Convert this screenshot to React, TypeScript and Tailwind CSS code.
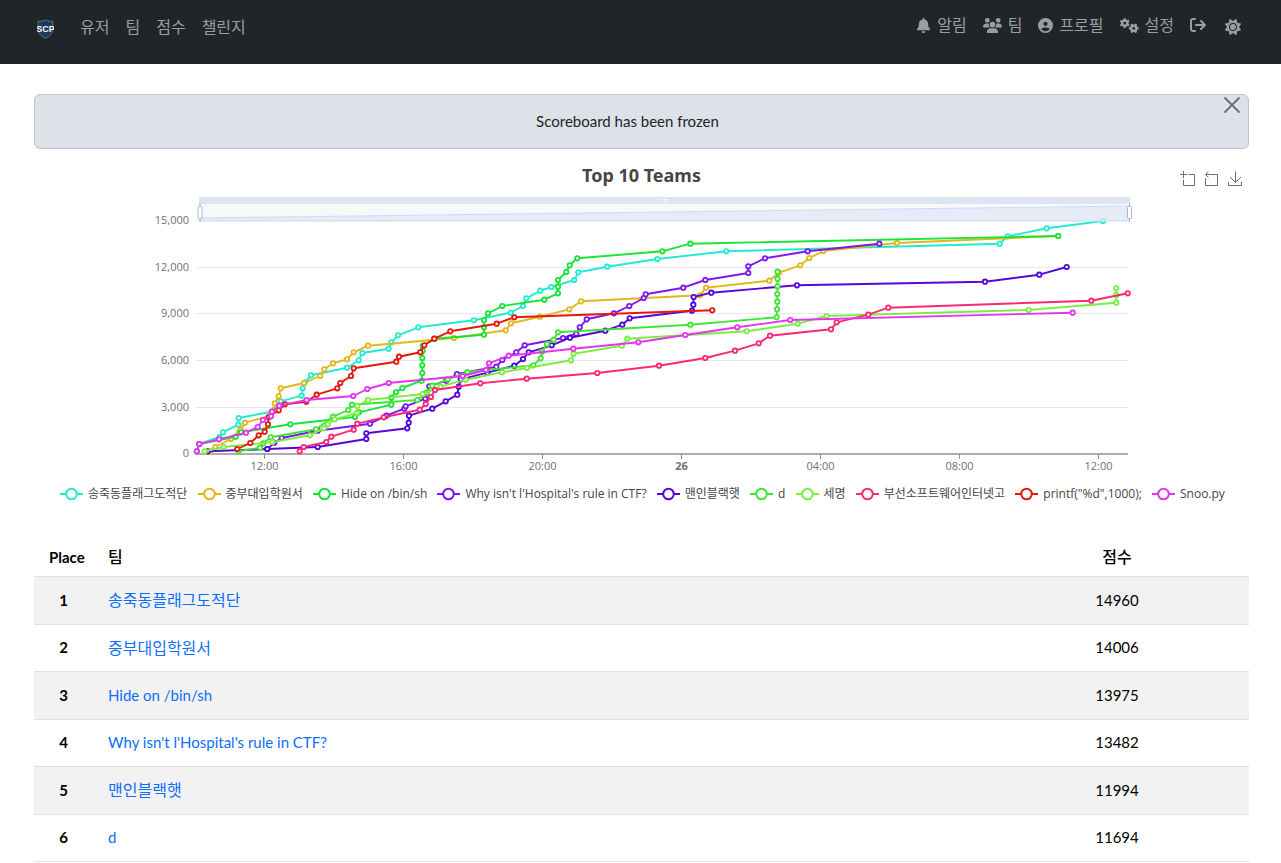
import type { ReactNode } from "react";
import {
  FaArrowRightFromBracket,
  FaBell,
  FaCircleUser,
  FaGears,
  FaSun,
  FaUsers,
} from "react-icons/fa6";

type Point = [number, number];

interface Series {
  name: string;
  color: string;
  points: Point[];
}

interface Standing {
  place: number;
  name: string;
  score: number;
}

const series: Series[] = [
  {
    name: "송죽동플래그도적단",
    color: "#22ebd0",
    points: [
      [197, 451.3], [199.3, 444], [219.5, 437], [223, 432.3], [238.4, 424.7], [238.7, 418],
      [271.5, 411.7], [280.7, 401.3], [301.7, 395.7], [302.7, 388.3], [305, 382.3], [311, 375.3],
      [347, 367.7], [358.7, 360.3], [362.3, 353], [388.7, 348.7], [391.3, 342.3], [398, 335.3],
      [418.3, 327.3], [473.7, 320.3], [510.7, 312.7], [523, 306], [526.3, 298.3], [540.3, 290.7],
      [551.3, 287], [574.3, 280], [578.3, 272.3], [607.3, 266.7], [657.3, 259], [726.3, 251.3],
      [999.7, 243.7], [1007.7, 236.3], [1046.7, 228.3], [1103, 221],
    ],
  },
  {
    name: "중부대입학원서",
    color: "#e3b71c",
    points: [
      [210.3, 451.3], [215.3, 447], [231, 439], [239, 432.7], [240.7, 429.7], [245, 422.7],
      [270, 415.7], [274.7, 403.3], [278.7, 396.3], [280.7, 388.3], [304, 383], [320.3, 376],
      [324.3, 369.3], [333, 363.3], [347, 359.3], [353.7, 352.3], [368, 345.7], [454, 338],
      [505.7, 330.3], [511, 323.3], [540, 316.7], [569.3, 309.3], [581, 301.3], [700, 295.3],
      [706, 287.7], [769.3, 280.7], [779, 272.7], [800.3, 265.3], [809.3, 258], [823.3, 251],
      [897, 243], [1058, 236],
    ],
  },
  {
    name: "Hide on /bin/sh",
    color: "#16e535",
    points: [
      [197, 451.3], [199.3, 444], [235.7, 436.7], [241, 432.3], [290.3, 424.3], [355, 417],
      [359, 412.3], [391.3, 404.7], [391.3, 397.7], [396, 392.3], [402.3, 388], [421.7, 380.7],
      [422.3, 373], [422.3, 365.3], [422.3, 358], [422.7, 350.7], [422.7, 346], [434.3, 338.7],
      [484, 334.7], [484, 327.3], [484, 320.3], [488, 313.3], [502.3, 306], [544.3, 299.7],
      [558, 293.3], [558, 286.7], [558, 280], [566.3, 272], [569.7, 265.3], [577.3, 258.3],
      [662.3, 251.3], [690.3, 243.7], [1058.3, 236],
    ],
  },
  {
    name: "Why isn't l'Hospital's rule in CTF?",
    color: "#8016ee",
    points: [
      [267.3, 449], [274.3, 442.7], [281.7, 438], [317.7, 430.7], [370, 423.7], [386.3, 415.7],
      [404.3, 408.7], [405.7, 406.3], [425.3, 398.7], [429.3, 386.3], [446.3, 380.7], [457, 374],
      [496.3, 366.7], [502.3, 360], [516.3, 352.3], [524.7, 345.3], [563, 338], [576.3, 333.7],
      [579.7, 327.3], [586.7, 319.3], [614, 313.3], [629.3, 306], [643.7, 298], [645.7, 294.3],
      [683.3, 287.7], [705.3, 280], [748.3, 273], [748.3, 266.3], [765, 258.3], [807.7, 251.3],
      [879.3, 243.7],
    ],
  },
  {
    name: "맨인블랙햇",
    color: "#5606dc",
    points: [
      [207.7, 451.3], [267.3, 449], [317.7, 447], [366.3, 439], [366.3, 433.3], [407.3, 428.3],
      [408.7, 422.7], [409, 415.7], [432.3, 408.7], [445.7, 401.3], [457.3, 394.7], [458.7, 386.7],
      [460.7, 379.3], [487.3, 372.7], [514.3, 365.7], [523, 359], [528.7, 352.3], [551.7, 345.3],
      [570, 337.7], [605.3, 330.7], [622.3, 324.7], [629.7, 318.3], [692, 310.7], [693.3, 304.7],
      [693.7, 297], [711.3, 292.7], [797, 285.3], [985, 281.7], [1039.3, 274.7], [1066.7, 267],
    ],
  },
  {
    name: "d",
    color: "#42e436",
    points: [
      [238.3, 451.3], [260, 447.7], [263.3, 443.3], [270.7, 437.3], [316, 429.3], [333, 416.7],
      [348.3, 410], [352, 404.7], [417.3, 400], [426.7, 392.7], [432.3, 385.7], [447.7, 379.3],
      [467.3, 372], [533.3, 365.3], [540.7, 358.3], [542, 351.7], [547, 344], [553.7, 339.7],
      [558, 332.3], [690.3, 324.7], [776.7, 317.3], [777, 309.3], [777.3, 301.7], [777.3, 294],
      [777.5, 286.3], [777.5, 278.7], [777.5, 271.7],
    ],
  },
  {
    name: "세명",
    color: "#7cee42",
    points: [
      [204.7, 451.3], [223.7, 447], [272.3, 442], [310, 435.3], [323.7, 428.3], [327.7, 424.3],
      [334.7, 419.3], [356.7, 413], [357.3, 406], [368, 400], [422.7, 394], [440.7, 386.7],
      [465.7, 379.7], [502, 372.3], [527, 368], [571, 360.3], [573.7, 353.7], [622, 345.7],
      [627.3, 338.7], [746.7, 331.3], [797.7, 323.7], [826.7, 316], [1028.7, 310], [1116.3, 302.7],
      [1116.3, 295], [1116.3, 288.3],
    ],
  },
  {
    name: "부선소프트웨어인터넷고",
    color: "#fd2874",
    points: [
      [299.7, 451.3], [303.7, 447], [326.3, 442], [331.3, 436.7], [353.7, 429.7], [357.3, 423.7],
      [383.7, 417.3], [419.7, 409.7], [425.7, 404], [431, 397], [435, 390], [480.3, 383.3],
      [526.7, 378.7], [597.3, 373], [659, 365.7], [705.3, 358], [735, 350.7], [758.7, 343.3],
      [770, 335.7], [831, 329.3], [836.7, 322.3], [868.3, 314.7], [888.3, 307.7], [1091.3, 300.7],
      [1127.7, 293.3],
    ],
  },
  {
    name: 'printf("%d",1000);',
    color: "#e2190b",
    points: [
      [237.3, 449], [250.3, 443], [258.7, 435.3], [264.7, 431.7], [268, 424.3], [268.7, 417],
      [278.7, 410.3], [285, 404.3], [306.3, 401.7], [316.7, 394.7], [337.3, 388.3], [340.3, 383],
      [351, 376], [353.7, 368.3], [396.3, 361.7], [399, 356.7], [420.3, 352.3], [424.3, 345.3],
      [434.3, 338.7], [450.3, 331.3], [496.7, 323.7], [514.3, 317.3], [712.3, 310.3],
    ],
  },
  {
    name: "Snoo.py",
    color: "#e135ee",
    points: [
      [196.7, 451.3], [199.3, 444], [219, 439.3], [246, 432.7], [257.7, 427], [263, 420],
      [271, 416.3], [272, 411.7], [279.3, 405.7], [306.7, 400], [353.3, 396], [367.3, 389],
      [388.7, 383], [462.7, 376], [486, 370], [489, 363.3], [508.7, 355.7], [573.3, 348.7],
      [638.3, 342.3], [685.3, 335], [737.3, 327.3], [790.3, 320], [1072.7, 312.7],
    ],
  },
];

const yTicks = [
  { label: "15,000", y: 220.5 },
  { label: "12,000", y: 267.5 },
  { label: "9,000", y: 313.5 },
  { label: "6,000", y: 360.5 },
  { label: "3,000", y: 407.5 },
  { label: "0", y: 454 },
];

const xTicks = [
  { label: "12:00", x: 264.5 },
  { label: "16:00", x: 403.5 },
  { label: "20:00", x: 542.5 },
  { label: "26", x: 681.5, bold: true },
  { label: "04:00", x: 820.5 },
  { label: "08:00", x: 959.5 },
  { label: "12:00", x: 1098.5 },
];

const standings: Standing[] = [
  { place: 1, name: "송죽동플래그도적단", score: 14960 },
  { place: 2, name: "중부대입학원서", score: 14006 },
  { place: 3, name: "Hide on /bin/sh", score: 13975 },
  { place: 4, name: "Why isn't l'Hospital's rule in CTF?", score: 13482 },
  { place: 5, name: "맨인블랙햇", score: 11994 },
  { place: 6, name: "d", score: 11694 },
];

// Hangul sits smaller on its em than Lato does
const isHangul = (text: string) => /[가-힣]/.test(text);

function Logo() {
  return (
    <svg width="17" height="20" viewBox="0 0 17 20" aria-hidden="true">
      <path
        d="M8.5 1 C6.5 2.2 3.5 2.6 1.2 2.2 V10 C1.2 14.5 4.5 17.5 8.5 19 C12.5 17.5 15.8 14.5 15.8 10 V2.2 C13.5 2.6 10.5 2.2 8.5 1Z"
        fill="#1d3a5c"
        stroke="#5b738c"
        strokeWidth="1"
      />
      <text
        x="8.5"
        y="12.5"
        fontSize="9"
        fontFamily="'Liberation Sans Narrow', 'Liberation Sans', sans-serif"
        fontWeight="700"
        fill="#f8fafc"
        textAnchor="middle"
      >
        SCP
      </text>
    </svg>
  );
}

function NavLink({ label, icon, title }: { label?: string; icon?: ReactNode; title?: string }) {
  return (
    <a
      href="#"
      aria-label={title}
      className="flex items-center gap-1.5 px-2 text-[#9b9d9f] hover:text-white"
    >
      {icon}
      {label && <span>{label}</span>}
    </a>
  );
}

function Navbar() {
  return (
    <header className="flex h-16 items-center justify-between bg-[#212529] pr-8 pb-2.5 pl-[37px] text-base">
      <nav className="flex items-center">
        <a href="#" aria-label="SCP" className="mt-1 mr-[18px]">
          <Logo />
        </a>
        <NavLink label="유저" />
        <NavLink label="팀" />
        <NavLink label="점수" />
        <NavLink label="챌린지" />
      </nav>
      <div className="flex items-center">
        <nav className="mr-[3px] flex items-center pb-1">
          <NavLink label="알림" icon={<FaBell size={15} />} />
          <NavLink label="팀" icon={<FaUsers size={19} />} />
          <NavLink label="프로필" icon={<FaCircleUser size={15} />} />
          <NavLink label="설정" icon={<FaGears size={19} />} />
          <NavLink title="Logout" icon={<FaArrowRightFromBracket size={16} />} />
        </nav>
        <button type="button" aria-label="Theme" className="px-2 text-[#9b9d9f]">
          <FaSun size={16} />
        </button>
      </div>
    </header>
  );
}

function Alert() {
  return (
    <div
      role="alert"
      className="relative rounded-md border border-[#bcc7d4] bg-[#dde1e8] py-4 pr-11 pl-4 text-center text-[15px] leading-[21px] text-[#212529]"
    >
      Scoreboard has been frozen
      <button type="button" aria-label="Close" className="absolute top-0 right-1.5 p-0.5 text-[#6c6f73]">
        <svg width="16" height="16" viewBox="0 0 16 16" stroke="currentColor" strokeWidth="1.8" strokeLinecap="round">
          <path d="M1 1 L15 15 M15 1 L1 15" />
        </svg>
      </button>
    </div>
  );
}

function Toolbox() {
  return (
    <div className="flex items-center justify-end gap-2 pt-2 pr-1.5 text-[#6f6f6f]">
      <button type="button" aria-label="Zoom">
        <svg width="16" height="16" viewBox="0 0 16 16" fill="none" stroke="currentColor">
          <path d="M4.5 0 V7 M1 3.5 H8 M4.5 8.5 V14.5 H15.5 V3.5 H9.5" />
        </svg>
      </button>
      <button type="button" aria-label="Restore">
        <svg width="16" height="16" viewBox="0 0 16 16" fill="none" stroke="currentColor">
          <path d="M5.5 0.5 L2.5 3.5 L5.5 6.5 M2.5 3.5 H14.5 V14.5 H2.5 V7" />
        </svg>
      </button>
      <button type="button" aria-label="Save as image">
        <svg width="16" height="16" viewBox="0 0 16 16" fill="none" stroke="currentColor">
          <path d="M8.5 0.5 V11 M3 6 L8.5 11.5 L14 6 M1.5 11 V14.5 H14.5 V11" />
        </svg>
      </button>
    </div>
  );
}

function ScoreGraph() {
  return (
    <svg viewBox="34 189 1215 289" className="block w-full" fontFamily="'Open Sans', sans-serif" fontSize="11">
      {yTicks.map((tick) => (
        <g key={tick.label}>
          {tick.label !== "0" && <path d={`M196 ${tick.y} H1128`} stroke="#e6e8f2" />}
          <text x="189" y={tick.y + 3} textAnchor="end" fill="#6e7079">
            {tick.label}
          </text>
        </g>
      ))}

      <path d="M196 454 H1128" stroke="#8f929c" strokeWidth="1.4" />
      {xTicks.map((tick) => (
        <g key={tick.x}>
          <path d={`M${tick.x} 454 V459`} stroke="#8f929c" />
          <text x={tick.x} y="470" textAnchor="middle" fill="#6e7079" fontWeight={tick.bold ? 700 : 400}>
            {tick.label}
          </text>
        </g>
      ))}

      {series.map((team) => (
        <g key={team.name} stroke={team.color}>
          <polyline points={team.points.map((p) => p.join(",")).join(" ")} fill="none" strokeWidth="1.9" strokeLinejoin="bevel" />
          {team.points.map(([x, y], i) => (
            <circle key={i} cx={x} cy={y} r="2.2" fill="#fff" strokeWidth="1.8" />
          ))}
        </g>
      ))}

      {/* zoom slider */}
      <rect x="199" y="197" width="931" height="7" fill="#d2dbee" fillOpacity="0.75" />
      <rect x="199" y="204" width="931" height="17.5" fill="#eef1f6" fillOpacity="0.5" />
      <path d="M200 218 L1130 206 V221 H200Z" fill="#d3def3" fillOpacity="0.5" />
      <path d="M200 218 L1130 206" stroke="#cfdbf4" />
      <path d="M199 221 H1130" stroke="#d2dbee" />
      <path d="M660 199.5 H669 M662 201.5 H667" stroke="#fff" strokeDasharray="1 1" />
      {[200, 1129.5].map((x) => (
        <g key={x} stroke="#acb8d1">
          <path d={`M${x} 203 V222`} />
          <rect x={x - 2} y="206.5" width="4" height="12" rx="1" fill="#fff" />
        </g>
      ))}
    </svg>
  );
}

function Legend() {
  return (
    <div className="flex h-8 items-center justify-between pr-6 pl-[26px] font-['Open_Sans','Noto_Sans_CJK_KR',sans-serif]">
      {series.map((team) => (
        <button key={team.name} type="button" className="flex items-center gap-1 whitespace-nowrap text-[#464646]">
          <svg width="24" height="14" viewBox="0 0 24 14" stroke={team.color} strokeWidth="2">
            <path d="M0 7 H23" />
            <circle cx="11.5" cy="7" r="5.3" fill="#fff" />
          </svg>
          <span className="text-xs">{team.name}</span>
        </button>
      ))}
    </div>
  );
}

function Scoreboard() {
  return (
    <table className="mt-7 w-full text-black">
      <thead>
        <tr className="h-[38px] border-b border-[#dee2e6] text-[15px]">
          <th className="w-[59px] pl-[15px] text-left font-bold">Place</th>
          <th className="pl-[15px] text-left text-base font-medium">팀</th>
          <th className="w-[264px] text-center text-base font-medium">점수</th>
        </tr>
      </thead>
      <tbody>
        {standings.map((team) => (
          <tr
            key={team.place}
            className="border-b border-[#dee2e6] text-[15px] odd:h-12 odd:bg-[#f2f2f2] even:h-[47px]"
          >
            <th scope="row" className="text-center font-bold">
              {team.place}
            </th>
            <td className="pl-[15px]">
              <a href="#" className={`text-[#0d6efd] ${isHangul(team.name) ? "text-base" : ""}`}>
                {team.name}
              </a>
            </td>
            <td className="text-center">{team.score}</td>
          </tr>
        ))}
      </tbody>
    </table>
  );
}

export default function App() {
  return (
    <div className="bg-white font-['Lato','Noto_Sans_CJK_KR',sans-serif]">
      <Navbar />
      <main className="pt-[30px] pr-8 pl-[34px]">
        <Alert />
        <section className="mt-3">
          <div className="grid h-7 grid-cols-[1fr_auto_1fr] items-center">
            <h2 className="col-start-2 font-['Noto_Sans',sans-serif] text-lg font-bold text-[#464646]">
              Top 10 Teams
            </h2>
            <Toolbox />
          </div>
          <ScoreGraph />
          <Legend />
        </section>
        <Scoreboard />
      </main>
    </div>
  );
}
